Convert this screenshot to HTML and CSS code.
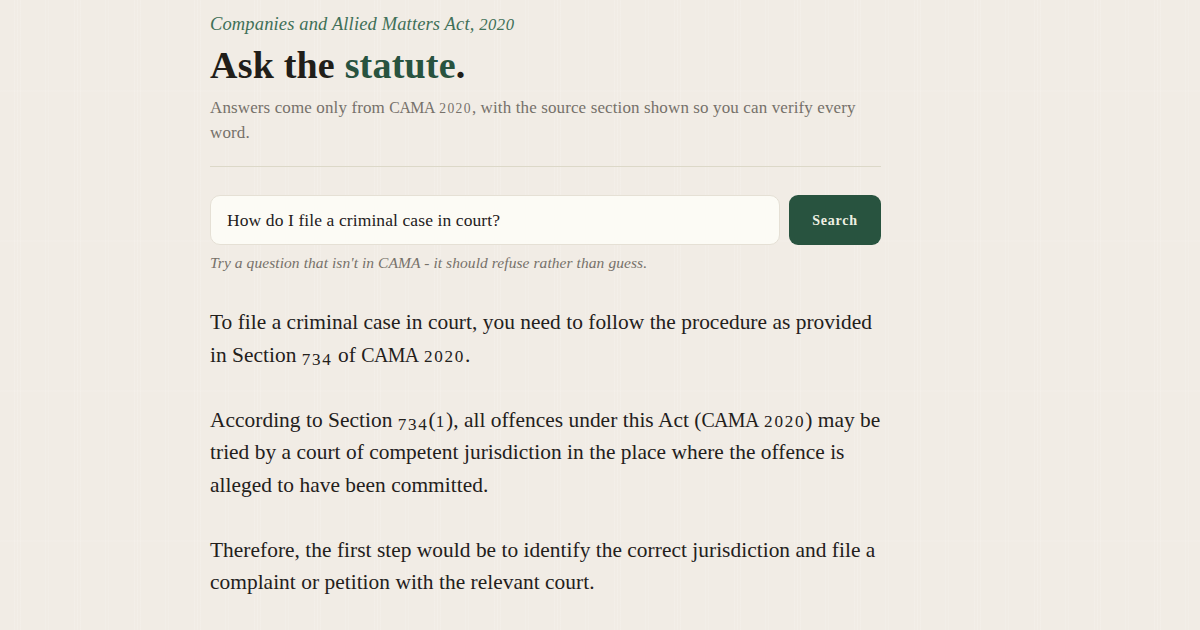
FILE: index.html
```html
<!DOCTYPE html>
<html lang="en">
<head>
<meta charset="utf-8">
<title>Ask the statute</title>
<link rel="stylesheet" href="styles.css">
</head>
<body>
<main class="page">
  <header class="head">
    <p class="eyebrow">Companies and Allied Matters Act, <span class="fig fig-tall">2020</span></p>
    <h1 class="title">Ask the <span class="accent">statute</span>.</h1>
    <p class="lede">Answers come only from <span class="caps">CAMA</span> <span class="fig">2020</span>, with the source section shown so you can verify every<br>word.</p>
  </header>
  <form class="search">
    <input class="field" type="text" value="How do I file a criminal case in court?">
    <button class="btn" type="button">Search</button>
  </form>
  <p class="hint">Try a question that isn't in CAMA - it should refuse rather than guess.</p>
  <section class="answer">
    <p>To file a criminal case in court, you need to follow the procedure as provided<br>in Section <span class="fig drop">734</span> of <span class="caps">CAMA</span> <span class="fig">2020</span>.</p>
    <p>According to Section <span class="fig drop">734</span>(<span class="fig">1</span>), all offences under this Act (<span class="caps">CAMA</span> <span class="fig">2020</span>) may be<br>tried by a court of competent jurisdiction in the place where the offence is<br>alleged to have been committed.</p>
    <p>Therefore, the first step would be to identify the correct jurisdiction and file a<br>complaint or petition with the relevant court.</p>
  </section>
</main>
</body>
</html>
```
FILE: styles.css
```css
* { box-sizing: border-box; }
html, body { margin: 0; height: 100%; }
body {
  overflow: hidden;
  background-color: #f1ece5;
  background-image:
    repeating-linear-gradient(90deg, transparent 0 14px, rgba(255,255,255,.14) 14px 15px, transparent 15px 17px, rgba(255,255,255,.14) 17px 18px, transparent 18px 20px, rgba(255,255,255,.14) 20px 21px, transparent 21px 45px, rgba(255,255,255,.1) 45px 46px, transparent 46px 48px, rgba(255,255,255,.1) 48px 49px, transparent 49px 60px),
    repeating-linear-gradient(0deg, transparent 0 88px, rgba(255,255,255,.06) 88px 90px, transparent 90px 150px);
  font-family: "Liberation Serif", "Times New Roman", serif;
  color: #23201b;
}
.page { width: 671px; margin-left: 210px; padding-top: 14px; }
.head { border-bottom: 1px solid #dcd8c8; padding-bottom: 21px; }
.eyebrow { margin: 0; font-size: 18.5px; line-height: 20px; font-style: italic; color: #3f7058; letter-spacing: .14px; }
.title { margin: 8px 0 0; font-size: 38px; line-height: 46px; font-weight: 700; color: #211e19; letter-spacing: .2px; }
.accent { color: #28533f; }
.lede { margin: 7px 0 0; font-size: 17px; line-height: 25px; color: #76716a; letter-spacing: .12px; }
.search { display: flex; gap: 9px; margin-top: 28px; }
.field { flex: 1; min-width: 0; height: 50px; padding: 0 16px; border: 1px solid #e5e0d5; border-radius: 10px; background: #fcfbf5; font: 17.5px "Liberation Serif", serif; letter-spacing: .1px; color: #23201b; outline: none; }
.btn { width: 92px; height: 50px; padding: 1px 0 0; border: 0; border-radius: 9px; background: #28533f; color: #eef0e2; font: 700 14px "Liberation Serif", serif; letter-spacing: .75px; }
.hint { margin: 9px 0 0; font-size: 15.5px; line-height: 18px; font-style: italic; color: #76716a; letter-spacing: .07px; }
.answer { margin-top: 34px; font-size: 21.4px; line-height: 32.5px; color: #23201b; letter-spacing: .03px; white-space: nowrap; }
.answer p { margin: 0 0 32.5px; }
.caps { font-size: .93em; letter-spacing: -.03em; line-height: 1; }
.fig { font-size: .8em; letter-spacing: .1em; line-height: 1; }
.fig-tall { font-size: .9em; letter-spacing: .03em; }
.drop { vertical-align: -.2em; }
```
